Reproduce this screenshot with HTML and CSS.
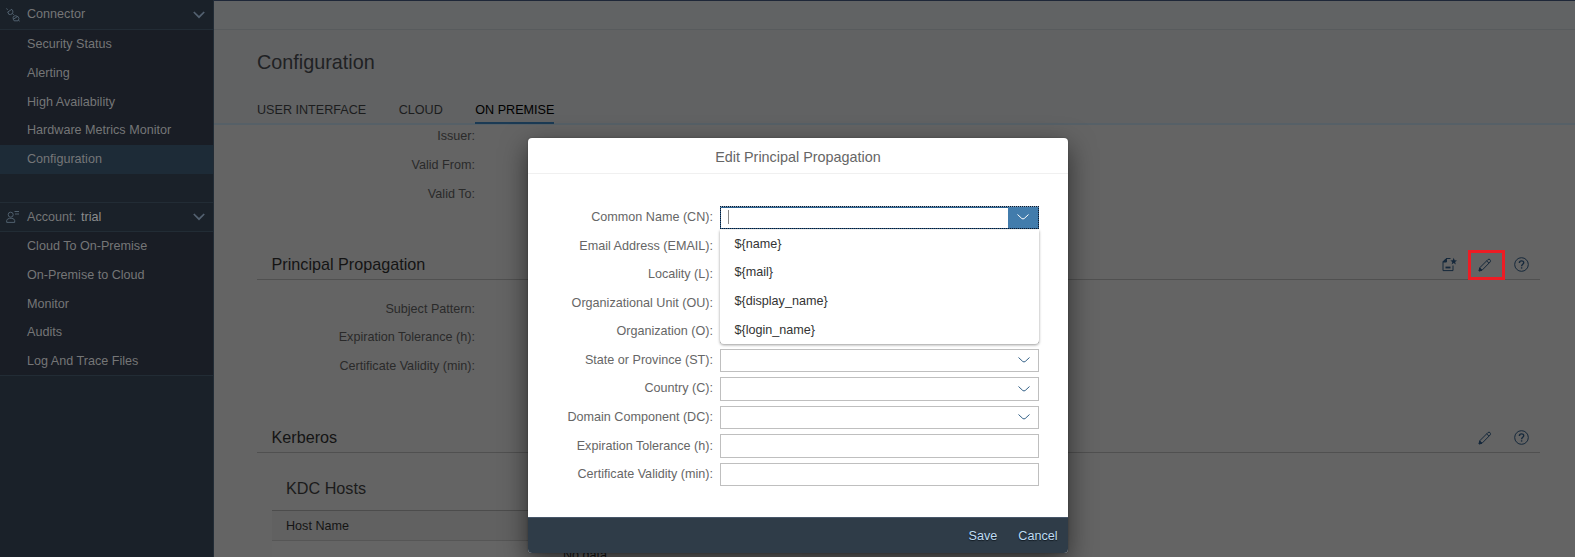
FILE: index.html
```html
<!DOCTYPE html>
<html lang="en">
<head>
<meta charset="utf-8">
<title>Configuration</title>
<link rel="stylesheet" href="styles.css">
</head>
<body>
<svg class="defs" width="0" height="0">
  <symbol id="pencil" viewBox="0 0 14 14"><path d="M1.200 12.800l.8-3.300L9.900 1.600q1.200-.9 2.100 0t.3 2.200L4.400 11.900zM8.700 2.900l2.300 2.300"/><path d="M1 13l.7-3 2.300 2.300z" fill="currentColor"/></symbol>
  <symbol id="help" viewBox="0 0 15 15"><circle cx="7.500" cy="7.500" r="6.800"/><path d="M5.400 5.900C5.400 3.200 9.700 3.200 9.700 5.700C9.700 7.300 7.600 7.100 7.600 9.200" stroke-width="1.400"/><path d="M7.600 10.300v1.300" stroke-width="1.400"/></symbol>
  <symbol id="arrow" viewBox="0 0 12 6"><path d="M.5 .5L4.800 4.500q1.200.9 2.400 0L11.500 .5"/></symbol>
</svg>
<div class="app">
  <nav class="side">
    <div class="group">
      <svg class="gicon" viewBox="0 0 14 14"><path d="M.3 .6l1.500 1M1.500 4.200L6 1.200M1.800 4l1 2.300q2 .8 3.400-.6t.3-3.600L5.700 1.500M6.200 5.200l1.500 1.600M7 11.500l5-3.300M7.300 11.200q-.8-2.400.8-3.200t3.400.5M7.300 11.300l.8 1.500h4l.9-2.200-1.200-2.200M12.300 12.200l1.400 1"/></svg>
      <span class="gname">Connector</span>
      <svg class="garrow" viewBox="0 0 12 8"><path d="M.8 1l5.200 5.200L11.200 1"/></svg>
    </div>
    <ul class="items">
      <li>Security Status</li><li>Alerting</li><li>High Availability</li><li>Hardware Metrics Monitor</li><li class="sel">Configuration</li>
    </ul>
    <div class="gap"></div>
    <div class="group second">
      <svg class="gicon" viewBox="0 0 14 14"><circle cx="4.700" cy="4.700" r="2.500"/><path d="M.7 12.400v-1.900q.2-1.700 2.800-2.200h2.400q2.600.5 2.800 2.200v1.900zM8.500 1.500H13M9 4h4"/></svg>
      <span class="gname">Account: <span class="acct">trial</span></span>
      <svg class="garrow" viewBox="0 0 12 8"><path d="M.8 1l5.200 5.200L11.200 1"/></svg>
    </div>
    <ul class="items last">
      <li>Cloud To On-Premise</li><li>On-Premise to Cloud</li><li>Monitor</li><li>Audits</li><li>Log And Trace Files</li>
    </ul>
  </nav>
  <main class="main">
    <div class="band"></div>
    <header class="head">
      <h1>Configuration</h1>
      <div class="tabs"><span>USER INTERFACE</span><span>CLOUD</span><span class="active">ON PREMISE</span></div>
    </header>
    <div class="content">
      <div class="labels cert"><span>Issuer:</span><span>Valid From:</span><span>Valid To:</span></div>
      <div class="section">
        <h2>Principal Propagation</h2>
        <div class="tools">
          <span class="tool"><svg class="doc" viewBox="0 0 15 15"><path d="M8.500 1.500H4.200L1 4.700V13.600h10V8.500"/><path d="M1 5h3.500V1.500z" fill="currentColor"/><path d="M3.500 10.500h5" stroke-width="1.800"/><path d="M11.700 .8l.9 2.500 2.400.1-1.900 1.500.7 2.500-2.100-1.400-2.100 1.400.7-2.500L8.400 3.400l2.400-.1z" fill="currentColor" stroke="none"/></svg></span>
          <span class="tool marked"><svg class="pen"><use href="#pencil"/></svg></span>
          <span class="tool"><svg class="help"><use href="#help"/></svg></span>
        </div>
      </div>
      <div class="labels pattern"><span>Subject Pattern:</span><span>Expiration Tolerance (h):</span><span>Certificate Validity (min):</span></div>
      <div class="section">
        <h2>Kerberos</h2>
        <div class="tools">
          <span class="tool"><svg class="pen"><use href="#pencil"/></svg></span>
          <span class="tool"><svg class="help"><use href="#help"/></svg></span>
        </div>
      </div>
      <div class="kdc">
        <h3>KDC Hosts</h3>
        <div class="th">Host Name</div>
        <div class="td">No data</div>
      </div>
    </div>
  </main>
</div>
<section class="dialog">
  <h4>Edit Principal Propagation</h4>
  <div class="form">
    <div class="row"><label>Common Name (CN):</label>
      <div class="field focus"><i class="caret"></i><span class="open"><svg class="arrow"><use href="#arrow"/></svg></span>
        <ul class="menu"><li>${name}</li><li>${mail}</li><li>${display_name}</li><li>${login_name}</li></ul>
      </div></div>
    <div class="row"><label>Email Address (EMAIL):</label><div class="field"></div></div>
    <div class="row"><label>Locality (L):</label><div class="field"></div></div>
    <div class="row"><label>Organizational Unit (OU):</label><div class="field"></div></div>
    <div class="row"><label>Organization (O):</label><div class="field"></div></div>
    <div class="row"><label>State or Province (ST):</label><div class="field"><svg class="arrow"><use href="#arrow"/></svg></div></div>
    <div class="row"><label>Country (C):</label><div class="field"><svg class="arrow"><use href="#arrow"/></svg></div></div>
    <div class="row"><label>Domain Component (DC):</label><div class="field"><svg class="arrow"><use href="#arrow"/></svg></div></div>
    <div class="row"><label>Expiration Tolerance (h):</label><div class="field"></div></div>
    <div class="row"><label>Certificate Validity (min):</label><div class="field"></div></div>
  </div>
  <footer><span>Save</span><span>Cancel</span></footer>
</section>
</body>
</html>
```
FILE: styles.css
```css
* { box-sizing: border-box; }
body { margin: 0; height: 557px; overflow: hidden; font: 12.6px/28.8px "Liberation Sans", Arial, sans-serif; }
h1, h2, h3, h4, ul { margin: 0; padding: 0; font-weight: normal; list-style: none; }
svg { fill: none; stroke: currentColor; display: block; }
.defs { position: absolute; }
.app { display: flex; height: 557px; overflow: hidden; }

.side { width: 214px; flex: none; background: #1a2129; border-right: 1px solid #222c36; color: #757677; }
.group { height: 30px; display: flex; align-items: center; padding: 0 8px 0 6px; border-bottom: 1px solid #222c35; }
.group.second { border-top: 1px solid #222c35; }
.gicon { width: 14px; height: 14px; color: #50606e; }
.gname { margin-left: 7px; flex: 1; }
.acct { color: #8b8c8d; margin-left: 1.500px; }
.garrow { width: 12px; height: 8px; color: #536170; stroke-width: 1.7; }
.items { background: #191d25; height: 144px; }
.items li { padding-left: 27px; height: 28.8px; }
.items .sel { background: #1d2b37; }
.items.last { height: 144px; border-bottom: 1px solid #222c35; }
.gap { height: 28px; }

.main { flex: 1; min-width: 0; background: #646464; border-top: 1px solid #1e2738; }
.band { height: 29px; background: #616364; border-bottom: 1px solid #585b5d; }
.head { height: 95px; background: #616263; border-bottom: 2px solid #566067; padding: 17px 0 0 43px; }
h1 { font-size: 19.8px; line-height: 30px; color: #1f2123; }
.tabs { display: flex; gap: 32.5px; margin-top: 17px; color: #1c1d1e; }
.tabs span { height: 30px; line-height: 32px; }
.tabs .active { color: #000; border-bottom: 2px solid #1b3a54; }
.content { padding-left: 43px; }
.labels { width: 218px; text-align: right; color: #2a2a2a; display: flex; flex-direction: column; }
.cert { height: 125px; margin-top: -4px; padding-top: 1px; }
.section { width: 1283px; height: 34px; display: flex; justify-content: space-between; border-bottom: 1px solid #505050; padding-left: 14.5px; color: #141414; }
h2, h3 { font-size: 16.2px; line-height: 36px; }
.tools { display: flex; align-items: center; height: 37px; padding-right: 1px; color: #15283b; }
.tool { width: 36px; height: 30px; display: grid; place-items: center; }
.marked { border: 3px solid #ed1c24; width: 37px; position: relative; left: 2px; }
.marked .pen { margin-left: -3px; }
.doc, .help { width: 15px; height: 15px; }
.tool:first-child .doc { margin-left: 2px; }
.pen { width: 14px; height: 14px; }
.pattern { padding-top: 14.500px; height: 139px; }
.kdc { width: 530px; margin-left: 15px; }
.kdc h3 { height: 57px; padding: 17px 0 0 14px; color: #1b1b1b; }
.th { height: 31px; line-height: 30px; padding-left: 14px; background: #616161; border-top: 1px solid #4c4c4c; border-bottom: 1px solid #565656; color: #141414; }
.td { padding-left: 291px; background: #656565; color: #141414; }

.dialog { position: absolute; left: 528px; top: 138px; width: 540px; height: 415px; background: #fff; border-radius: 4px; display: flex; flex-direction: column; box-shadow: 0 9px 27px rgba(0,0,0,.55), 0 0 2px rgba(0,0,0,.3); color: #666; }
h4 { height: 36px; font-size: 14.4px; line-height: 38px; text-align: center; border-bottom: 1px solid #f0f0f0; }
.form { flex: 1; padding: 29px 29px 0 0; }
.row { height: 28.6px; display: flex; align-items: center; justify-content: flex-end; gap: 7px; }
.field { position: relative; width: 319px; height: 23.4px; border: 1px solid #bfbfbf; background: #fff; display: flex; align-items: center; justify-content: flex-end; padding-right: 8.5px; color: #346187; }
.arrow { width: 12px; height: 6px; }
.focus { border: 1px dotted #10182a; background: linear-gradient(#fff, #fff) padding-box, linear-gradient(#9db8cf, #2b6290 10%) border-box; box-shadow: inset 0 1px 0 #2b6290; padding: 0; justify-content: space-between; }
.caret { width: 1px; height: 14px; background: #888; margin-left: 7px; }
.open { width: 30px; height: 21.4px; background: #427cac; color: #fff; display: grid; place-items: center; }
.menu { position: absolute; z-index: 2; left: -1px; top: 23px; width: 319px; height: 114px; background: #fff; border-radius: 0 0 4px 4px; box-shadow: 0 1px 3px rgba(0,0,0,.4); color: #333; }
.menu li { height: 28.7px; padding-left: 14.500px; }
footer { height: 36px; background: #2f3c48; border-top: 1px solid #465669; border-radius: 0 0 4px 4px; display: flex; justify-content: flex-end; gap: 21px; padding-right: 10.5px; line-height: 36px; color: #bfdcf3; text-shadow: 0 1px 1px #101820; }
```
